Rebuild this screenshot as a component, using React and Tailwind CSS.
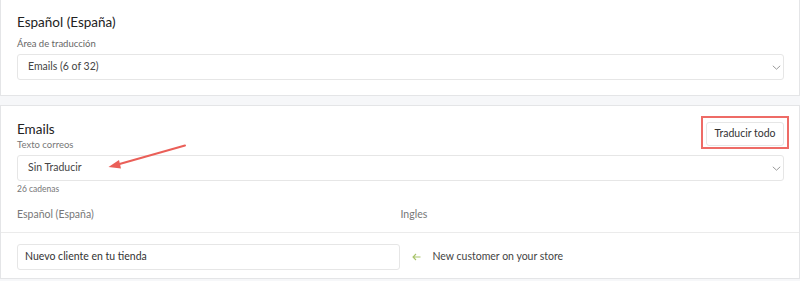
import React from "react";

function Chevron() {
  return (
    <svg width="9" height="5" viewBox="0 0 9 5" className="shrink-0">
      <path d="M0.8 0.8l3.7 3.4 3.7-3.4" fill="none" stroke="#9a9a9a" strokeWidth="1" />
    </svg>
  );
}

function Select({ value }) {
  return (
    <div className="flex h-[26px] items-center justify-between rounded-[3px] border border-[#e6e6e6] bg-white pl-[10px] pr-[2px] text-[10.5px] text-[#444]">
      <span>{value}</span>
      <Chevron />
    </div>
  );
}

export default function App() {
  return (
    <div
      className="relative h-[281px] w-[800px] overflow-hidden bg-[#f6f7f9]"
      style={{ fontFamily: "Lato, 'Open Sans', sans-serif" }}
    >
      {/* Card 1 */}
      <div className="border-x border-b border-[#e4e5e7] bg-white pl-[16px] pr-[15px] pt-[13px] pb-[15px]">
        <div className="text-[13.5px] leading-[18px] text-[#222]">Español (España)</div>
        <div className="mt-[6px] text-[9.5px] leading-[14px] text-[#666]">Área de traducción</div>
        <div className="mt-[3px]">
          <Select value="Emails (6 of 32)" />
        </div>
      </div>

      {/* Card 2 */}
      <div className="mt-[9px] border border-[#e4e5e7] bg-white">
        <div className="border-b border-[#ebebeb] pl-[16px] pr-[15px] pt-[14px] pb-[10px]">
          <div className="flex items-start justify-between">
            <div>
              <div className="text-[13.5px] leading-[18px] text-[#222]">Emails</div>
              <div className="text-[9.5px] leading-[14px] text-[#777]">Texto correos</div>
            </div>
            <div className="relative mt-[2px]">
              <div className="flex h-[24px] w-[78px] items-center justify-center rounded-[3px] border border-[#e6e6e6] bg-white text-[10.5px] text-[#333]">
                Traducir todo
              </div>
              <div className="pointer-events-none absolute -top-[6px] -bottom-[3px] -left-[5px] -right-[5px] border-2 border-[#ee6b66]" />
            </div>
          </div>
          <div className="mt-[3px]">
            <Select value="Sin Traducir" />
          </div>
          <div className="mt-[2px] text-[8.5px] leading-[12px] text-[#777]">26 cadenas</div>
          <div className="mt-[11px] grid grid-cols-2 text-[10.5px] leading-[16px] text-[#777]">
            <div>Español (España)</div>
            <div>Ingles</div>
          </div>
        </div>
        <div className="grid grid-cols-2 pl-[16px] pr-[15px] pt-[11px] pb-[8px]">
          <div className="mr-[1px] flex h-[26px] items-center rounded-[3px] border border-[#e6e6e6] bg-white pl-[7px] text-[10.5px] text-[#333]">
            Nuevo cliente en tu tienda
          </div>
          <div className="flex items-center pl-[11px] text-[10.5px] text-[#444]">
            <svg width="9" height="8" viewBox="0 0 9 8" className="mr-[12px]">
              <path d="M8.5 4H1M4 1L1 4 4 7" fill="none" stroke="#a8c46a" strokeWidth="1.1" />
            </svg>
            New customer on your store
          </div>
        </div>
      </div>

      {/* Annotation arrow */}
      <svg className="pointer-events-none absolute left-0 top-0" width="800" height="281">
        <line x1="185" y1="145.5" x2="116" y2="165" stroke="#ea5f58" strokeWidth="2" strokeLinecap="round" />
        <path d="M108.5 167 L119 160 L121 168.5 Z" fill="#ea5f58" />
      </svg>
    </div>
  );
}
